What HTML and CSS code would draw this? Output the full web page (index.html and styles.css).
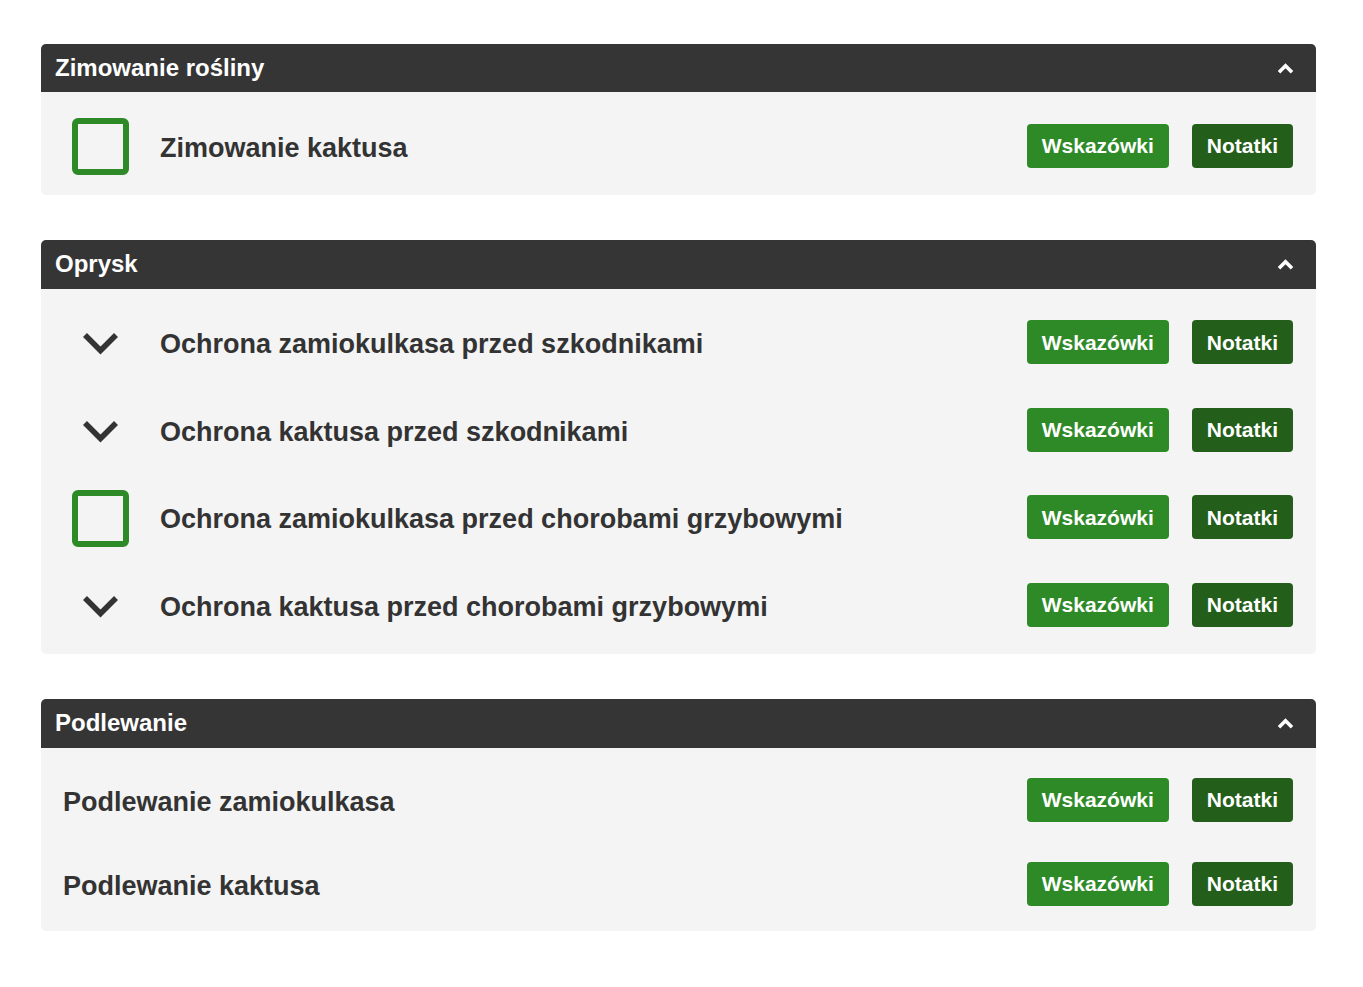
FILE: index.html
```html
<!DOCTYPE html>
<html lang="pl">
<head>
<meta charset="utf-8">
<title>Zadania</title>
<link rel="stylesheet" href="styles.css">
</head>
<body>
<div class="page">

  <section class="panel">
    <div class="panel-head">
      <h2 class="panel-title">Zimowanie rośliny</h2>
      <svg class="caret" viewBox="0 0 17 11" width="17" height="11"><polyline points="2,9.2 8.5,2.7 15,9.2" fill="none" stroke="#fff" stroke-width="3.6"/></svg>
    </div>
    <div class="panel-body">
      <div class="row">
        <div class="icon-slot"><span class="checkbox"></span></div>
        <span class="row-text">Zimowanie kaktusa</span>
        <div class="actions"><button class="btn btn-hint">Wskazówki</button><button class="btn btn-notes">Notatki</button></div>
      </div>
    </div>
  </section>

  <section class="panel">
    <div class="panel-head panel-head-tall">
      <h2 class="panel-title">Oprysk</h2>
      <svg class="caret" viewBox="0 0 17 11" width="17" height="11"><polyline points="2,9.2 8.5,2.7 15,9.2" fill="none" stroke="#fff" stroke-width="3.6"/></svg>
    </div>
    <div class="panel-body">
      <div class="row">
        <div class="icon-slot"><svg class="chev" viewBox="0 0 37 23" width="37" height="23"><polyline points="3,3 18.5,18.5 34,3" fill="none" stroke="#333" stroke-width="5.6"/></svg></div>
        <span class="row-text">Ochrona zamiokulkasa przed szkodnikami</span>
        <div class="actions"><button class="btn btn-hint">Wskazówki</button><button class="btn btn-notes">Notatki</button></div>
      </div>
      <div class="row">
        <div class="icon-slot"><svg class="chev" viewBox="0 0 37 23" width="37" height="23"><polyline points="3,3 18.5,18.5 34,3" fill="none" stroke="#333" stroke-width="5.6"/></svg></div>
        <span class="row-text">Ochrona kaktusa przed szkodnikami</span>
        <div class="actions"><button class="btn btn-hint">Wskazówki</button><button class="btn btn-notes">Notatki</button></div>
      </div>
      <div class="row">
        <div class="icon-slot"><span class="checkbox"></span></div>
        <span class="row-text">Ochrona zamiokulkasa przed chorobami grzybowymi</span>
        <div class="actions"><button class="btn btn-hint">Wskazówki</button><button class="btn btn-notes">Notatki</button></div>
      </div>
      <div class="row">
        <div class="icon-slot"><svg class="chev" viewBox="0 0 37 23" width="37" height="23"><polyline points="3,3 18.5,18.5 34,3" fill="none" stroke="#333" stroke-width="5.6"/></svg></div>
        <span class="row-text">Ochrona kaktusa przed chorobami grzybowymi</span>
        <div class="actions"><button class="btn btn-hint">Wskazówki</button><button class="btn btn-notes">Notatki</button></div>
      </div>
    </div>
  </section>

  <section class="panel">
    <div class="panel-head panel-head-tall">
      <h2 class="panel-title">Podlewanie</h2>
      <svg class="caret" viewBox="0 0 17 11" width="17" height="11"><polyline points="2,9.2 8.5,2.7 15,9.2" fill="none" stroke="#fff" stroke-width="3.6"/></svg>
    </div>
    <div class="panel-body">
      <div class="row row-plain">
        <span class="row-text">Podlewanie zamiokulkasa</span>
        <div class="actions"><button class="btn btn-hint">Wskazówki</button><button class="btn btn-notes">Notatki</button></div>
      </div>
      <div class="row row-plain">
        <span class="row-text">Podlewanie kaktusa</span>
        <div class="actions"><button class="btn btn-hint">Wskazówki</button><button class="btn btn-notes">Notatki</button></div>
      </div>
    </div>
  </section>

</div>
</body>
</html>
```

FILE: styles.css
```css
* { box-sizing: border-box; }

html, body {
  margin: 0;
  padding: 0;
  background: #ffffff;
}

body {
  font-family: "Liberation Sans", Arial, sans-serif;
  color: #333333;
}

.page {
  width: 1275px;
  margin-left: 41px;
  padding-top: 44px;
  display: flex;
  flex-direction: column;
  gap: 45px;
}

.panel {
  border-radius: 5px;
  overflow: hidden;
}

.panel-head {
  height: 48px;
  background: #353535;
  display: flex;
  align-items: center;
  justify-content: space-between;
  padding: 0 22px 0 14px;
}

.panel-head-tall {
  height: 49px;
}

.panel-title {
  margin: 0;
  font-size: 24px;
  font-weight: 700;
  color: #ffffff;
  line-height: 1;
}

.caret {
  display: block;
}

.panel-body {
  background: #f4f4f4;
  padding: 11px 0 4px;
}

.row {
  height: 87.5px;
  display: flex;
  align-items: center;
  padding: 0 23px 0 29px;
}

.row-plain {
  height: 84px;
  padding-left: 22px;
}

.icon-slot {
  width: 60px;
  height: 60px;
  display: flex;
  align-items: center;
  justify-content: center;
  margin-right: 30px;
  flex: none;
}

.checkbox {
  display: block;
  width: 57px;
  height: 57px;
  border: 6.5px solid #2e8a27;
  border-radius: 6px;
  background: #f4f4f4;
}

.chev {
  display: block;
  margin-top: 1px;
}

.row-text {
  flex: 1;
  font-size: 27px;
  font-weight: 700;
  color: #333333;
  line-height: 1;
  padding-top: 3px;
}

.actions {
  display: flex;
  gap: 23px;
  margin-top: -2px;
}

.btn {
  height: 44px;
  padding: 0 15px;
  border: none;
  border-radius: 4px;
  font-family: "Liberation Sans", Arial, sans-serif;
  font-size: 21px;
  font-weight: 700;
  color: #ffffff;
  line-height: 1;
}

.btn-hint {
  background: #2e8a27;
}

.btn-notes {
  background: #235f1a;
}
```
